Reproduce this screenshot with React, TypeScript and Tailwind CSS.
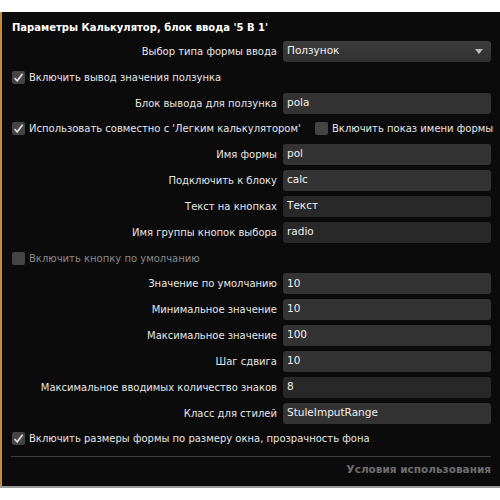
import React from "react";

type Row =
  | { kind: "field"; label: string; value: string; dim?: boolean; h?: number }
  | { kind: "check"; label: string; checked: boolean; muted?: boolean; h?: number };

const rows: Row[] = [
  { kind: "check", label: "Включить вывод значения ползунка", checked: true },
  { kind: "field", label: "Блок вывода для ползунка", value: "pola" },
];

const rowsB: Row[] = [
  { kind: "field", label: "Имя формы", value: "pol" },
  { kind: "field", label: "Подключить к блоку", value: "calc" },
  { kind: "field", label: "Текст на кнопках", value: "Текст", dim: true },
  { kind: "field", label: "Имя группы кнопок выбора", value: "radio", dim: true },
  { kind: "check", label: "Включить кнопку по умолчанию", checked: false, muted: true },
  { kind: "field", label: "Значение по умолчанию", value: "10", h: 25 },
  { kind: "field", label: "Минимальное значение", value: "10" },
  { kind: "field", label: "Максимальное значение", value: "100" },
  { kind: "field", label: "Шаг сдвига", value: "10" },
  { kind: "field", label: "Максимальное вводимых количество знаков", value: "8", dim: true },
  { kind: "field", label: "Класс для стилей", value: "StuleImputRange" },
  { kind: "check", label: "Включить размеры формы по размеру окна, прозрачность фона", checked: true, h: 25 },
];

const CheckBox: React.FC<{ checked: boolean }> = ({ checked }) => (
  <span className="flex h-[13px] w-[13px] shrink-0 items-center justify-center rounded-[2px] bg-[#444]">
    {checked && (
      <svg width="11" height="11" viewBox="0 0 11 11">
        <path d="M1.5 6 L4.2 8.8 L9.6 1.8" fill="none" stroke="#d8d8d8" strokeWidth="1.8" />
      </svg>
    )}
  </span>
);

const Label: React.FC<{ text: string }> = ({ text }) => (
  <div className="w-[275px] shrink-0 whitespace-nowrap text-right text-[#e6e6e6]">{text}</div>
);

const Input: React.FC<{ value: string; dim?: boolean }> = ({ value, dim }) => (
  <div
    className={
      "flex h-[21px] w-[208px] items-center rounded-[3px] pl-[4px] text-[10.5px] text-[#f0f0f0] " +
      (dim ? "bg-[#282828]" : "bg-[#333333]")
    }
  >
    {value}
  </div>
);

const RowView: React.FC<{ row: Row }> = ({ row }) => {
  const h = row.h === 25 ? "h-[25px]" : "h-[26px]";
  if (row.kind === "check") {
    return (
      <div className={"flex items-center gap-[4px] whitespace-nowrap pl-[10px] " + h}>
        <CheckBox checked={row.checked} />
        <span className={row.muted ? "text-[#8a8a8a]" : "text-[#e6e6e6]"}>{row.label}</span>
      </div>
    );
  }
  return (
    <div className={"flex items-center gap-[6px] " + h}>
      <Label text={row.label} />
      <Input value={row.value} dim={row.dim} />
    </div>
  );
};

export default function App() {
  return (
    <div className="h-[500px] w-[500px] overflow-hidden bg-white pt-[12px] text-[10px] [font-family:'DejaVu_Sans',sans-serif]">
      <div className="flex h-[474px] flex-col border-l-2 border-[#c98a30] bg-[#0b0b0b]">
        <div className="flex h-[26px] items-center whitespace-nowrap pl-[10px] pt-[5px] text-[10px] font-bold text-white">
          Параметры Калькулятор, блок ввода '5 В 1'
        </div>

        <div className="flex h-[26px] items-center gap-[6px]">
          <Label text="Выбор типа формы ввода" />
          <div className="flex h-[21px] w-[208px] items-center justify-between rounded-[3px] bg-gradient-to-b from-[#3d3d3d] to-[#303030] pl-[4px] pr-[8px] text-[10.5px] text-[#f0f0f0]">
            <span>Ползунок</span>
            <svg width="8" height="5" viewBox="0 0 8 5">
              <path d="M0 0 L8 0 L4 5 Z" fill="#bdbdbd" />
            </svg>
          </div>
        </div>

        {rows.map((r, i) => (
          <RowView key={i} row={r} />
        ))}

        <div className="flex h-[25px] items-center whitespace-nowrap pl-[10px]">
          <div className="flex w-[303px] shrink-0 items-center gap-[4px]">
            <CheckBox checked />
            <span className="text-[#e6e6e6]">Использовать совместно с 'Легким калькулятором'</span>
          </div>
          <div className="flex items-center gap-[4px]">
            <CheckBox checked={false} />
            <span className="text-[#e6e6e6]">Включить показ имени формы</span>
          </div>
        </div>

        {rowsB.map((r, i) => (
          <RowView key={i} row={r} />
        ))}

        <div className="ml-[9px] mt-[5px] h-px w-[480px] bg-[#3c3c3c]" />
        <div className="flex w-[489px] justify-end pt-[5px] text-[10.5px] font-bold text-[#6e6e6e]">
          Условия использования
        </div>
      </div>
      <div className="h-[2px] bg-[#9a9a9a]" />
    </div>
  );
}
